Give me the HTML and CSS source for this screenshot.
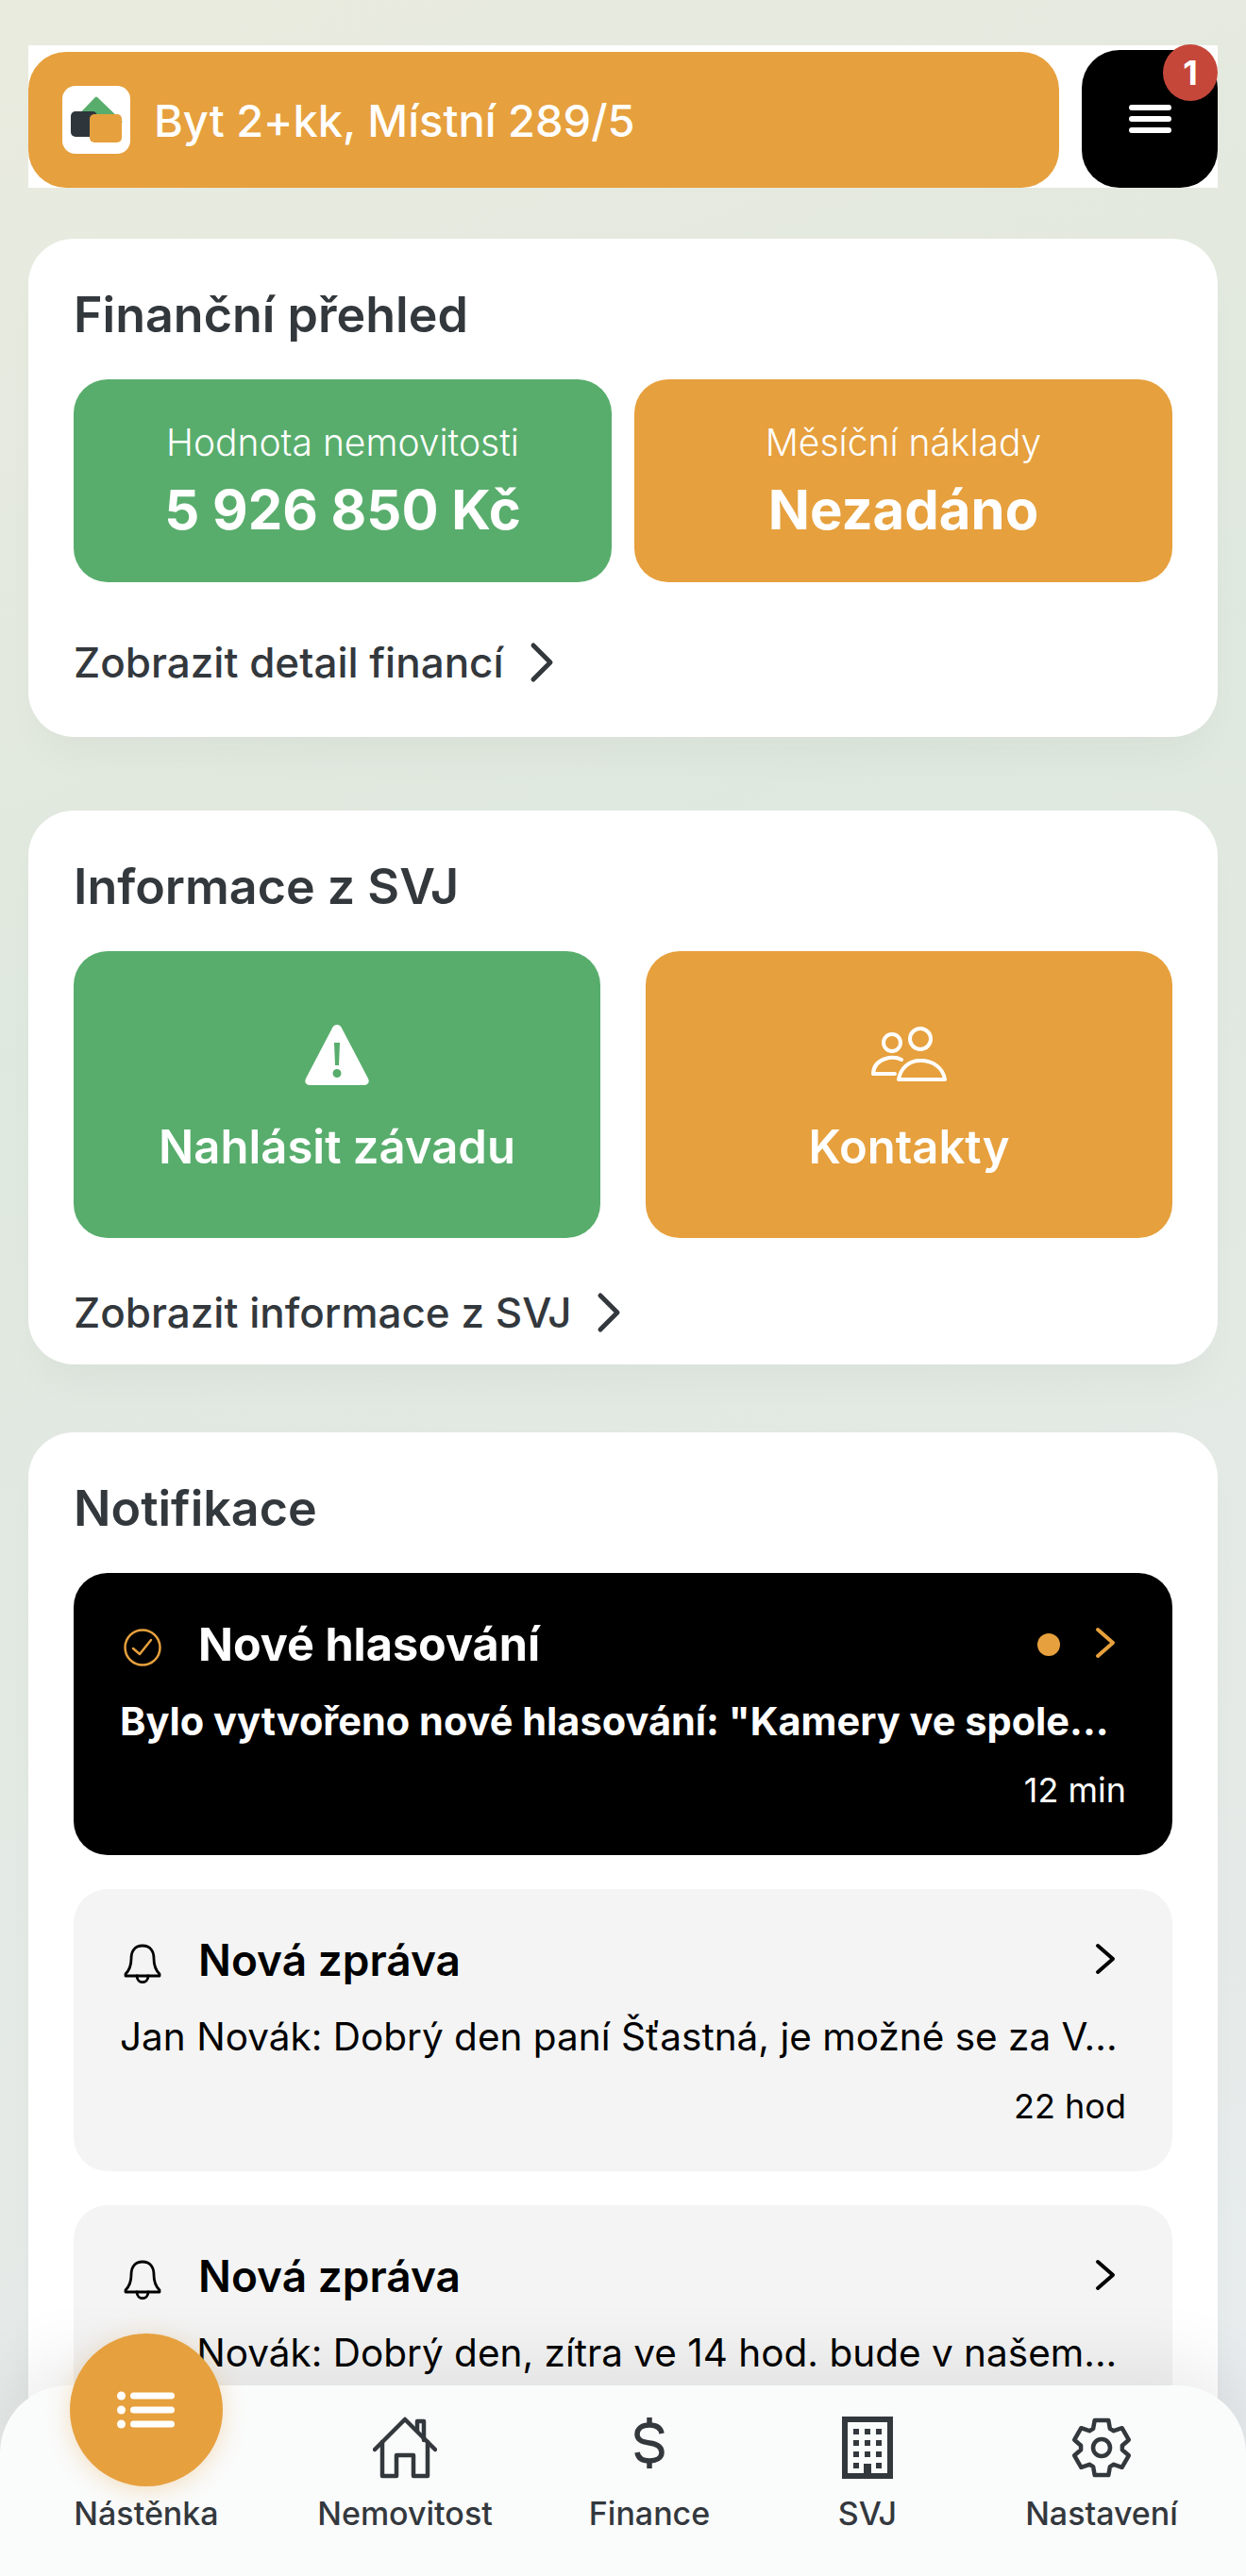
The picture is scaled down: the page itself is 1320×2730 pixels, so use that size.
FILE: index.html
```html
<!DOCTYPE html>
<html lang="cs">
<head>
    <meta charset="UTF-8">
    <meta name="viewport" content="width=device-width, initial-scale=1.0">
    <title>Nástěnka</title>
    <link rel="stylesheet" href="styles.css">
</head>
<body>
    <div class="page">
        <header class="top-bar">
            <div class="unit-select">
                <div class="logo">
                    <svg width="72" height="72" viewBox="0 0 72 72">
                        <path d="M36 13 L62 38 H12 Z" fill="#58ad6c" stroke="#58ad6c" stroke-width="3" stroke-linejoin="round"/>
                        <rect x="9" y="27" width="28" height="27" rx="5" fill="#2f363b"/>
                        <rect x="29" y="30" width="34" height="30" rx="5" fill="#e6a03d"/>
                    </svg>
                </div>
                <span>Byt 2+kk, Místní 289/5</span>
            </div>
            <div class="menu-button">
                <span class="menu-line"></span>
                <span class="menu-line"></span>
                <span class="menu-line"></span>
                <span class="badge">1</span>
            </div>
        </header>

        <section class="card card-finance">
            <h2>Finanční přehled</h2>
            <div class="stat-row">
                <div class="stat green">
                    <div class="stat-label">Hodnota nemovitosti</div>
                    <div class="stat-value">5 926 850 Kč</div>
                </div>
                <div class="stat orange">
                    <div class="stat-label">Měsíční náklady</div>
                    <div class="stat-value">Nezadáno</div>
                </div>
            </div>
            <a class="detail-link">
                Zobrazit detail financí
                <svg width="28" height="44" viewBox="0 0 28 44"><path d="M5 4 L23 22 L5 40" fill="none" stroke="#33383d" stroke-width="5" stroke-linecap="round" stroke-linejoin="round"/></svg>
            </a>
        </section>

        <section class="card card-svj">
            <h2>Informace z SVJ</h2>
            <div class="action-row">
                <div class="action green">
                    <svg width="68" height="64" viewBox="0 0 68 64">
                        <path fill-rule="evenodd" fill="#fff" d="M34 0 C36.500 0 38 1.500 39 3.500 L67 57 C69 61 66.500 64 63 64 H5 C1.500 64 -1 61 1 57 L29 3.500 C30 1.500 31.500 0 34 0 Z M31 19 L32 43 H36 L37 19 Z M34 47 A4 4 0 1 0 34 56 A4 4 0 1 0 34 47 Z"/>
                    </svg>
                    <span>Nahlásit závadu</span>
                </div>
                <div class="action orange">
                    <svg width="80" height="64" viewBox="0 0 80 64" fill="none" stroke="#fff" stroke-width="4" stroke-linecap="round" stroke-linejoin="round">
                        <circle cx="22" cy="19" r="9"/>
                        <circle cx="52" cy="15" r="11"/>
                        <path d="M32 37 C24 33 3 34 2 52 H25"/>
                        <path d="M29 58 C31 46 40 38 52 38 C66 38 76 46 78 58 Z"/>
                    </svg>
                    <span>Kontakty</span>
                </div>
            </div>
            <a class="detail-link">
                Zobrazit informace z SVJ
                <svg width="28" height="44" viewBox="0 0 28 44"><path d="M5 4 L23 22 L5 40" fill="none" stroke="#33383d" stroke-width="5" stroke-linecap="round" stroke-linejoin="round"/></svg>
            </a>
        </section>

        <section class="card card-notifications">
            <h2>Notifikace</h2>

            <div class="notification unread">
                <div class="notification-head">
                    <svg class="notification-icon" width="40" height="40" viewBox="0 0 40 40" fill="none" stroke="#e6a03d" stroke-width="2.500" stroke-linecap="round" stroke-linejoin="round">
                        <circle cx="20" cy="20" r="18.500"/>
                        <path d="M10 21 L17 27 L29 12"/>
                    </svg>
                    <span class="notification-title">Nové hlasování</span>
                    <span class="dot"></span>
                    <svg class="chevron" width="24" height="34" viewBox="0 0 24 34"><path d="M4 3 L20 17 L4 31" fill="none" stroke="#e6a03d" stroke-width="4" stroke-linecap="round" stroke-linejoin="round"/></svg>
                </div>
                <div class="notification-text">Bylo vytvořeno nové hlasování: "Kamery ve spole...</div>
                <div class="notification-time">12 min</div>
            </div>

            <div class="notification">
                <div class="notification-head">
                    <svg class="notification-icon" width="40" height="42" viewBox="0 0 40 42" fill="none" stroke="#000" stroke-width="2.800" stroke-linecap="round" stroke-linejoin="round">
                        <path d="M20 2 C11 2 8 9 8 16 C8 24 6 28 2 32 V34 H38 V32 C34 28 32 24 32 16 C32 9 29 2 20 2 Z"/>
                        <path d="M14 34 C14 43 26 43 26 34"/>
                    </svg>
                    <span class="notification-title">Nová zpráva</span>
                    <svg class="chevron" width="24" height="34" viewBox="0 0 24 34"><path d="M4 3 L20 17 L4 31" fill="none" stroke="#000" stroke-width="4" stroke-linecap="round" stroke-linejoin="round"/></svg>
                </div>
                <div class="notification-text">Jan Novák: Dobrý den paní Šťastná, je možné se za V...</div>
                <div class="notification-time">22 hod</div>
            </div>

            <div class="notification">
                <div class="notification-head">
                    <svg class="notification-icon" width="40" height="42" viewBox="0 0 40 42" fill="none" stroke="#000" stroke-width="2.800" stroke-linecap="round" stroke-linejoin="round">
                        <path d="M20 2 C11 2 8 9 8 16 C8 24 6 28 2 32 V34 H38 V32 C34 28 32 24 32 16 C32 9 29 2 20 2 Z"/>
                        <path d="M14 34 C14 43 26 43 26 34"/>
                    </svg>
                    <span class="notification-title">Nová zpráva</span>
                    <svg class="chevron" width="24" height="34" viewBox="0 0 24 34"><path d="M4 3 L20 17 L4 31" fill="none" stroke="#000" stroke-width="4" stroke-linecap="round" stroke-linejoin="round"/></svg>
                </div>
                <div class="notification-text">Jan Novák: Dobrý den, zítra ve 14 hod. bude v našem...</div>
            </div>
        </section>
    </div>

    <nav class="bottom-nav">
        <div class="nav-item">
            <div class="nav-fab">
                <svg width="62" height="40" viewBox="0 0 62 40" fill="#fff">
                    <circle cx="4.500" cy="5" r="4.500"/><rect x="14" y="1.500" width="47" height="7" rx="3.500"/>
                    <circle cx="4.500" cy="20" r="4.500"/><rect x="14" y="16.500" width="47" height="7" rx="3.500"/>
                    <circle cx="4.500" cy="35" r="4.500"/><rect x="14" y="31.500" width="47" height="7" rx="3.500"/>
                </svg>
            </div>
            <div class="nav-icon"></div>
            <span>Nástěnka</span>
        </div>
        <div class="nav-item">
            <div class="nav-icon">
                <svg width="68" height="66" viewBox="0 0 68 66" fill="none" stroke="#33383d" stroke-width="4.500" stroke-linecap="round" stroke-linejoin="round">
                    <path d="M2 35 L34 3 L66 35"/>
                    <path d="M47 15 V5 H54 V25"/>
                    <path d="M10 27 V63 H25 V41 H43 V63 H58 V27"/>
                </svg>
            </div>
            <span>Nemovitost</span>
        </div>
        <div class="nav-item">
            <div class="nav-icon">
                <svg width="34" height="56" viewBox="0 0 34 56" fill="none" stroke="#33383d" stroke-width="5.500">
                    <path d="M30 18 C29 12 24 9 17 9 C9 9 4 13 4 19 C4 25 9 27 17 28 C25 29 30 32 30 38 C30 44 24 47 17 47 C10 47 5 44 4 38"/>
                    <path d="M17 1 V9 M17 47 V55"/>
                </svg>
            </div>
            <span>Finance</span>
        </div>
        <div class="nav-item">
            <div class="nav-icon">
                <svg width="54" height="66" viewBox="0 0 54 66" fill="#33383d">
                    <path fill-rule="evenodd" d="M0 0 H54 V66 H0 Z M6 6 V60 H23 V50 H31 V60 H48 V6 Z"/>
                    <rect x="12" y="13" width="6" height="6"/><rect x="24" y="13" width="6" height="6"/><rect x="36" y="13" width="6" height="6"/>
                    <rect x="12" y="25" width="6" height="6"/><rect x="24" y="25" width="6" height="6"/><rect x="36" y="25" width="6" height="6"/>
                    <rect x="12" y="37" width="6" height="6"/><rect x="24" y="37" width="6" height="6"/><rect x="36" y="37" width="6" height="6"/>
                    <rect x="12" y="49" width="6" height="6"/><rect x="36" y="49" width="6" height="6"/>
                </svg>
            </div>
            <span>SVJ</span>
        </div>
        <div class="nav-item">
            <div class="nav-icon">
                <svg width="64" height="66" viewBox="0 0 64 64" fill="none" stroke="#33383d" stroke-width="4.500" stroke-linejoin="round">
                    <path d="M24.700 2.900 L39.300 2.900 L40.900 11.900 L44.900 14.200 L53.600 11.200 L60.800 23.700 L53.900 29.700 L53.900 34.300 L60.800 40.300 L53.600 52.800 L44.900 49.800 L40.900 52.100 L39.300 61.100 L24.700 61.100 L23.100 52.100 L19.100 49.800 L10.400 52.800 L3.200 40.300 L10.100 34.300 L10.100 29.700 L3.200 23.700 L10.400 11.200 L19.100 14.200 L23.100 11.900 Z"/>
                    <circle cx="32" cy="32" r="9"/>
                </svg>
            </div>
            <span>Nastavení</span>
        </div>
    </nav>
</body>
</html>
```

FILE: styles.css
```css
* {
    box-sizing: border-box;
}

html, body {
    margin: 0;
    height: 2730px;
    overflow: hidden;
}

body {
    position: relative;
    font-family: Inter, "Noto Sans", sans-serif;
    background: linear-gradient(160deg, #eaebdf 0%, #dfe8df 35%, #e3e9e3 60%, #e8ecef 100%);
}

.page {
    height: 2730px;
    padding: 48px 30px 0;
    overflow: hidden;
}

/* Top bar */
.top-bar {
    display: flex;
    align-items: flex-end;
    justify-content: space-between;
    height: 151px;
    background-color: #fff;
}

.unit-select {
    display: flex;
    align-items: center;
    gap: 25px;
    width: 1092px;
    height: 144px;
    padding-left: 36px;
    background-color: #e6a03d;
    border-radius: 40px;
    color: #fff;
    font-size: 47px;
    font-weight: 500;
}

.logo {
    width: 72px;
    height: 72px;
    background-color: #fff;
    border-radius: 14px;
}

.menu-button {
    position: relative;
    display: flex;
    flex-direction: column;
    align-items: center;
    justify-content: center;
    gap: 6px;
    width: 144px;
    height: 146px;
    background-color: #000;
    border-radius: 40px;
}

.menu-line {
    width: 45px;
    height: 6px;
    background-color: #fff;
    border-radius: 3px;
}

.badge {
    position: absolute;
    top: -6px;
    right: 0;
    display: flex;
    align-items: center;
    justify-content: center;
    width: 58px;
    height: 60px;
    background-color: #c5473a;
    border-radius: 50%;
    color: #fff;
    font-size: 36px;
    font-weight: 700;
}

/* Cards */
.card {
    margin-bottom: 78px;
    padding: 0 48px;
    background-color: #fff;
    border-radius: 48px;
    box-shadow: 0 30px 40px -10px rgba(0, 0, 0, 0.03);
}

.card-finance {
    height: 528px;
    margin-top: 54px;
}

.card-svj {
    height: 587px;
    margin-bottom: 72px;
}

.card-notifications {
    height: 1212px;
    overflow: hidden;
}

.card h2 {
    margin: 0;
    padding-top: 50px;
    height: 149px;
    color: #33383d;
    font-size: 52px;
    font-weight: 600;
    line-height: 62px;
}

.green {
    background-color: #58ad6c;
}

.orange {
    background-color: #e6a03d;
}

.stat-row {
    display: flex;
    gap: 24px;
}

.stat {
    flex: 1;
    height: 215px;
    padding-top: 44px;
    border-radius: 36px;
    color: #fff;
    text-align: center;
}

.stat-label {
    font-size: 39px;
    font-weight: 300;
    line-height: 46px;
}

.stat-value {
    margin-top: 13px;
    font-size: 58px;
    font-weight: 700;
    line-height: 70px;
}

.action-row {
    display: flex;
    gap: 48px;
}

.action {
    flex: 1;
    display: flex;
    flex-direction: column;
    align-items: center;
    height: 304px;
    padding-top: 78px;
    border-radius: 36px;
    color: #fff;
    font-size: 49px;
    font-weight: 600;
}

.action span {
    margin-top: 36px;
}

.detail-link {
    display: flex;
    align-items: center;
    gap: 26px;
    color: #33383d;
    font-size: 44px;
    font-weight: 500;
}

.card-finance .detail-link {
    margin-top: 58px;
}

.card-svj .detail-link {
    margin-top: 52px;
}

/* Notifications */
.notification {
    height: 299px;
    margin-bottom: 36px;
    padding: 50px 49px 0;
    background-color: #f4f4f4;
    border-radius: 36px;
    color: #000;
}

.notification.unread {
    background-color: #000;
    color: #fff;
}

.notification-head {
    display: flex;
    align-items: center;
    height: 58px;
}

.notification-icon {
    margin-right: 39px;
    margin-left: 4px;
}

.notification-title {
    flex: 1;
    padding-bottom: 8px;
    font-size: 46px;
    font-weight: 600;
}

.unread .notification-title {
    font-size: 48.500px;
    font-weight: 700;
}

.dot {
    width: 24px;
    height: 24px;
    margin-right: 36px;
    margin-top: -6px;
    background-color: #e6a03d;
    border-radius: 50%;
}

.chevron {
    margin-right: 10px;
    margin-top: -10px;
}

.notification-text {
    margin-top: 23px;
    font-size: 40.500px;
    line-height: 52px;
    white-space: nowrap;
}

.unread .notification-text {
    font-size: 41.500px;
    font-weight: 700;
}

.notification-time {
    margin-top: 25px;
    font-size: 36px;
    line-height: 44px;
    text-align: right;
}

/* Bottom navigation */
.bottom-nav {
    position: absolute;
    left: 0;
    right: 0;
    bottom: 0;
    display: grid;
    grid-template-columns: 190px 358px 160px 302px 194px;
    height: 202px;
    padding: 33px 0 0 60px;
    background-color: #fafbfb;
    border-radius: 72px 72px 0 0;
    box-shadow: 0 -30px 70px rgba(0, 0, 0, 0.07);
}

.nav-item {
    position: relative;
    display: flex;
    flex-direction: column;
    align-items: center;
    color: #33383d;
    font-size: 34px;
    font-weight: 500;
}

.nav-icon {
    height: 66px;
    margin-bottom: 16px;
}

.nav-icon svg {
    display: block;
}

.nav-fab {
    position: absolute;
    top: -88px;
    left: 14px;
    display: flex;
    align-items: center;
    justify-content: center;
    width: 162px;
    height: 162px;
    background-color: #e6a03d;
    border-radius: 50%;
    box-shadow: 0 4px 24px rgba(230, 160, 61, 0.3);
}
```
